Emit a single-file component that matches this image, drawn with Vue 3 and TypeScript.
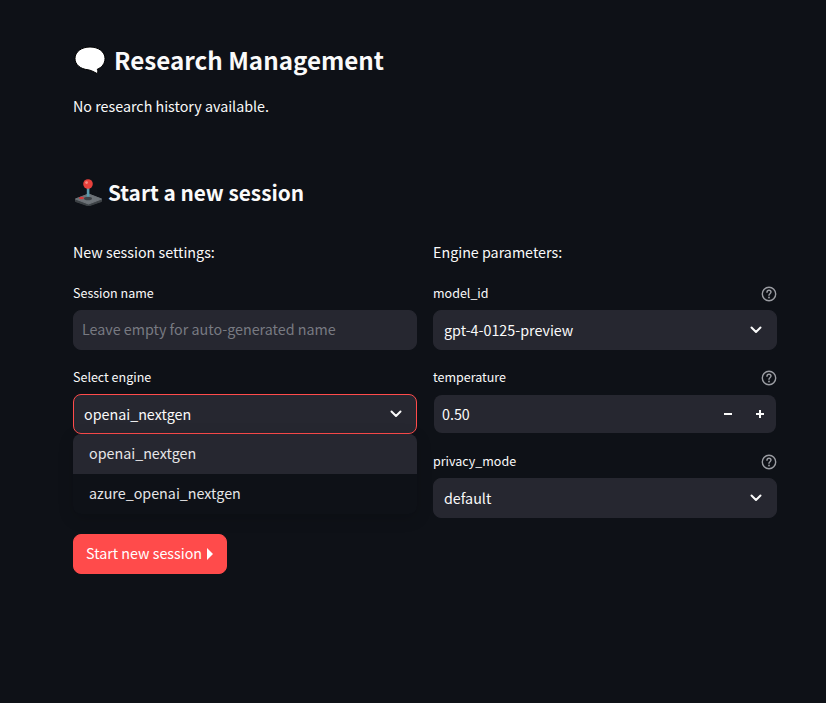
<template>
  <main class="page">
    <h1 class="title">
      <svg class="emoji-chat" viewBox="0 0 32 30" aria-hidden="true">
        <path class="emoji-outline" d="M16 1C7.500 1 1 5.800 1 12.500 1 18.700 6.500 23 14 23.800c2.500.3 5 1.500 9 3.700.9-.6 1-2.600.3-4.300C27.800 21.500 31 17.500 31 12.500 31 5.800 24.500 1 16 1z" />
      </svg>
      <span>Research Management</span>
    </h1>
    <p class="history">No research history available.</p>

    <h2 class="subtitle">
      <svg class="emoji-stick" viewBox="0 0 27 27" aria-hidden="true">
        <path d="M.5 20 13.500 15 26.500 20v2.500L13.500 27 .5 22.500z" fill="#3e4347" stroke="#3e4347" stroke-linejoin="round" />
        <path d="M.5 20 13.500 15 26.500 20 13.500 25z" fill="#6d7378" stroke="#6d7378" stroke-linejoin="round" />
        <rect x="11.800" y="9" width="2.600" height="10" fill="#5a9bad" />
        <ellipse cx="13" cy="19.500" rx="4" ry="1.800" fill="#3e4347" />
        <ellipse cx="6.500" cy="19" rx="2.500" ry="1.200" fill="#d33b3b" />
        <circle cx="13" cy="5" r="4.800" fill="#e8413c" />
        <circle cx="11.600" cy="3.600" r="1.400" fill="#f58d84" />
      </svg>
      <span>Start a new session</span>
    </h2>

    <div class="columns">
      <section class="column">
        <p class="column-title">New session settings:</p>

        <div class="field">
          <label class="field-label">Session name</label>
          <div class="control placeholder">Leave empty for auto-generated name</div>
        </div>

        <div class="field">
          <label class="field-label">Select engine</label>
          <div class="select-wrap">
            <div class="control select active">
              <span>{{ engines[0] }}</span>
              <svg class="chevron" viewBox="0 0 12 8" aria-hidden="true"><path d="M1.500 1.500 6 6l4.500-4.500" /></svg>
            </div>
            <ul class="menu">
              <li v-for="(engine, i) in engines" :key="engine" :class="{ highlighted: i === 0 }">{{ engine }}</li>
            </ul>
          </div>
        </div>
      </section>

      <section class="column">
        <p class="column-title">Engine parameters:</p>

        <div v-for="param in params" :key="param.label" class="field">
          <label class="field-label">
            <span>{{ param.label }}</span>
            <svg class="help" viewBox="0 0 16 16" aria-hidden="true">
              <circle cx="8" cy="8" r="6.700" />
              <path d="M6 6.300C6 5 6.900 4.300 8 4.300s2 .8 2 1.800c0 1.600-2 1.600-2 3.200" />
              <circle class="help-dot" cx="8" cy="11.500" r=".9" />
            </svg>
          </label>
          <div v-if="param.kind === 'number'" class="number-wrap">
            <div class="control number">
              <span class="number-value">{{ param.value }}</span>
              <span class="step">
                <svg viewBox="0 0 10 10" aria-hidden="true"><path d="M1 5h8" /></svg>
              </span>
              <span class="step">
                <svg viewBox="0 0 10 10" aria-hidden="true"><path d="M1 5h8M5 1v8" /></svg>
              </span>
            </div>
          </div>
          <div v-else class="control select">
            <span>{{ param.value }}</span>
            <svg class="chevron" viewBox="0 0 12 8" aria-hidden="true"><path d="M1.500 1.500 6 6l4.500-4.500" /></svg>
          </div>
        </div>
      </section>
    </div>

    <button class="start" type="button">
      <span>Start new session</span>
      <svg class="caret" viewBox="0 0 6 12" aria-hidden="true"><path d="M0 0l6 6-6 6z" /></svg>
    </button>
  </main>
</template>

<script setup lang="ts">
type Param = { label: string; value: string; kind: 'select' | 'number' }

const engines: string[] = ['openai_nextgen', 'azure_openai_nextgen']

const params: Param[] = [
  { label: 'model_id', value: 'gpt-4-0125-preview', kind: 'select' },
  { label: 'temperature', value: '0.50', kind: 'number' },
  { label: 'privacy_mode', value: 'default', kind: 'select' },
]
</script>

<style>
html,
body {
  background: #0e1117;
}
</style>

<style scoped>
.page {
  box-sizing: border-box;
  width: 826px;
  height: 703px;
  padding: 39px 49px 0 73px;
  background: #0e1117;
  color: #fafafa;
  font-family: "Noto Sans CJK SC", "Noto Sans", sans-serif;
  font-size: 14.3px;
  overflow: hidden;
}
.title {
  display: flex;
  align-items: center;
  gap: 8px;
  height: 42px;
  margin: 0 0 0 1px;
  font-size: 24.2px;
  line-height: 42px;
  font-weight: 600;
}
.emoji-chat {
  width: 32px;
  height: 30px;
  flex: none;
  margin-top: 2px;
}
.emoji-outline {
  fill: #fff;
  stroke: #000;
  stroke-width: 1;
}
.history {
  margin: 13px 0 0;
  height: 24px;
  line-height: 24px;
}
.subtitle {
  display: flex;
  align-items: center;
  gap: 6px;
  height: 36px;
  margin: 56px 0 0 2px;
  font-size: 20.8px;
  line-height: 36px;
  font-weight: 600;
}
.emoji-stick {
  width: 27px;
  height: 27px;
  flex: none;
  margin-top: 1px;
}
.columns {
  display: grid;
  grid-template-columns: 344px 344px;
  gap: 16px;
  margin-top: 30px;
}
.column {
  min-width: 0;
}
.column-title {
  height: 24px;
  margin: 0 0 20px;
  line-height: 24px;
}
.field {
  margin-bottom: 18px;
}
.field:last-child {
  margin-bottom: 0;
}
.field-label {
  display: flex;
  align-items: center;
  justify-content: space-between;
  height: 26px;
  padding-bottom: 9px;
  box-sizing: border-box;
  font-size: 12.500px;
  line-height: 19px;
}
.help {
  width: 16px;
  height: 16px;
  margin-top: 2px;
  fill: none;
  stroke: #9b9da3;
  stroke-width: 1.400;
  stroke-linecap: round;
}
.help-dot {
  fill: #9b9da3;
  stroke: none;
}
.control {
  box-sizing: border-box;
  display: flex;
  align-items: center;
  height: 40px;
  padding: 0 10px;
  background: #262730;
  border: 1px solid #262730;
  border-radius: 8px;
  line-height: 24px;
}
.placeholder {
  padding: 0 8px 2px;
  color: #787a82;
}
.select {
  justify-content: space-between;
  padding-right: 14px;
}
.active {
  border-color: #ff4b4b;
}
.select-wrap {
  position: relative;
}
.chevron {
  width: 12px;
  height: 8px;
  fill: none;
  stroke: #fafafa;
  stroke-width: 2;
  stroke-linecap: round;
  stroke-linejoin: round;
}
.menu {
  position: absolute;
  top: 40px;
  left: 0;
  right: 0;
  margin: 0;
  padding: 0;
  list-style: none;
  background: #0e1117;
  border-radius: 8px;
  overflow: hidden;
  box-shadow: 0 4px 16px rgba(0, 0, 0, 0.16);
}
.menu li {
  height: 40px;
  padding-left: 16px;
  line-height: 38px;
  color: #e6e6e8;
}
.menu li.highlighted {
  background: #262730;
}
.number-wrap {
  padding: 1px;
}
.number {
  height: 38px;
  padding: 0 0 0 8px;
  border: 0;
}
.number-value {
  flex: 1;
}
.step {
  display: flex;
  align-items: center;
  justify-content: center;
  width: 32px;
  height: 38px;
}
.step svg {
  width: 10px;
  height: 10px;
  fill: none;
  stroke: #fafafa;
  stroke-width: 2;
}
.start {
  display: flex;
  align-items: center;
  gap: 5px;
  height: 40px;
  margin-top: 16px;
  padding: 0 13px 2px 12px;
  background: #ff4b4b;
  border: 1px solid #ff4b4b;
  border-radius: 8px;
  color: #fff;
  font: inherit;
  line-height: 24px;
}
.caret {
  width: 6px;
  height: 12px;
  margin-top: 2px;
  fill: #fff;
}
</style>
